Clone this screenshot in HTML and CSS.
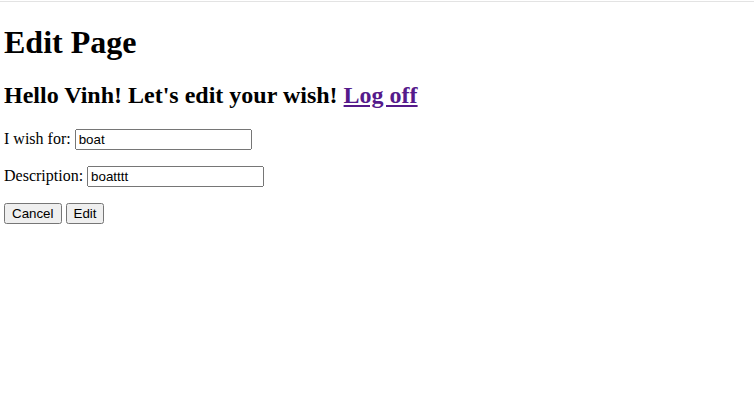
FILE: index.html
```html
<!DOCTYPE html>
<html lang="en">
<head>
<meta charset="utf-8">
<title>Edit Page</title>
<link rel="stylesheet" href="styles.css">
</head>
<body class="page">
<h1 class="title">Edit Page</h1>
<h2 class="greeting">Hello Vinh! Let's edit your wish! <a class="logoff" href="#">Log off</a></h2>
<form class="wish-form">
  <p class="field"><label>I wish for: <input class="text-input" type="text" value="boat"></label></p>
  <p class="field"><label>Description: <input class="text-input" type="text" value="boatttt"></label></p>
  <p class="actions"><button class="btn" type="button">Cancel</button> <button class="btn" type="submit">Edit</button></p>
</form>
</body>
</html>
```

FILE: styles.css
```css
html {
  background: #fff;
}
.page {
  margin: 8px 4px;
  font-family: "Liberation Serif", "Times New Roman", serif;
  font-size: 16px;
  color: #000;
}
.page::before {
  content: "";
  position: fixed;
  top: 1px;
  left: 0;
  right: 0;
  height: 1px;
  background: #e3e3e3;
}
.title {
  font-size: 32px;
  font-weight: bold;
  margin-top: 15.5px;
}
.greeting {
  font-size: 24px;
  font-weight: bold;
}
.logoff {
  color: #551a8b;
  text-decoration: underline;
}
.text-input {
  box-sizing: border-box;
  width: 177px;
  height: 21px;
  font-family: "Liberation Sans", Arial, sans-serif;
  font-size: 13.333px;
  color: #000;
}
.btn {
  font-family: "Liberation Sans", Arial, sans-serif;
  font-size: 13.333px;
  color: #000;
}
```
